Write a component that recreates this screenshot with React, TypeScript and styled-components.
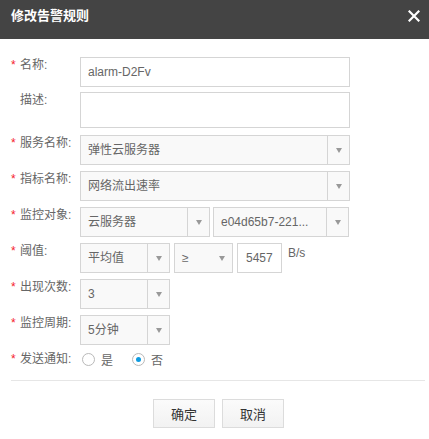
import React from "react";
import styled, { createGlobalStyle } from "styled-components";

const GlobalStyle = createGlobalStyle`
  html, body { margin: 0; padding: 0; background: #fff; }
  body { font-family: "Liberation Sans", "Noto Sans CJK SC", sans-serif; }
  * { box-sizing: border-box; }
`;

const Dialog = styled.div`
  width: 429px;
  height: 439px;
  background: #fff;
  display: flex;
  flex-direction: column;
`;

const Header = styled.div`
  height: 39px;
  background: #444;
  display: flex;
  justify-content: space-between;
  align-items: flex-start;
  padding: 7px 9px 0 11px;
`;

const Title = styled.div`
  color: #fff;
  font-size: 13px;
  font-weight: bold;
  line-height: 17px;
`;

const Close = styled.button`
  border: 0;
  background: transparent;
  padding: 0;
  margin-top: 3px;
  width: 12px;
  height: 12px;
  display: flex;
  cursor: pointer;
`;

const Body = styled.div`
  padding: 18px 4px 0 11px;
  display: flex;
  flex-direction: column;
`;

const Row = styled.div<{ $gap?: number }>`
  display: flex;
  align-items: flex-start;
  margin-bottom: ${(p) => (p.$gap ?? 6)}px;
`;

const Label = styled.div`
  width: 69px;
  flex: none;
  display: flex;
  font-size: 12px;
  line-height: 17px;
  color: #666;
`;

const Star = styled.span`
  width: 9px;
  color: #f5222d;
  font-size: 12px;
`;

const Controls = styled.div<{ $gap?: number }>`
  display: flex;
  align-items: flex-start;
  gap: ${(p) => p.$gap ?? 4}px;
`;

const TextInput = styled.div<{ $w: number; $h?: number; $pad?: number }>`
  width: ${(p) => p.$w}px;
  height: ${(p) => p.$h ?? 30}px;
  border: 1px solid #d5d5d5;
  background: #fff;
  font-size: 12px;
  color: #666;
  line-height: 28px;
  padding-left: ${(p) => p.$pad ?? 7}px;
  white-space: nowrap;
  overflow: hidden;
`;

const SelectBox = styled.div<{ $w: number }>`
  width: ${(p) => p.$w}px;
  height: 30px;
  border: 1px solid #d5d5d5;
  background: #f9f9f9;
  display: flex;
  font-size: 12px;
  color: #666;
`;

const SelectValue = styled.div`
  flex: 1;
  line-height: 28px;
  padding-left: 7px;
  white-space: nowrap;
  overflow: hidden;
`;

const ArrowCell = styled.div<{ $divider: boolean }>`
  width: 22px;
  flex: none;
  border-left: 1px solid ${(p) => (p.$divider ? "#d5d5d5" : "transparent")};
  display: flex;
  align-items: center;
  justify-content: center;
`;

const Arrow = styled.span`
  width: 0;
  height: 0;
  border-left: 3.5px solid transparent;
  border-right: 3.5px solid transparent;
  border-top: 5px solid #999;
  margin-top: 1px;
`;

const Unit = styled.div`
  font-size: 12px;
  line-height: 17px;
  color: #666;
  margin-left: 2px;
  padding-top: 2px;
`;

const RadioGroup = styled.div`
  display: flex;
  align-items: center;
  height: 17px;
  padding-left: 2px;
  gap: 19px;
`;

const RadioItem = styled.label`
  display: flex;
  align-items: center;
  gap: 6px;
  font-size: 12px;
  color: #666;
  cursor: pointer;
`;

const RadioCircle = styled.span<{ $checked: boolean }>`
  width: 13px;
  height: 13px;
  border-radius: 50%;
  border: 1px solid #b9b9b9;
  background: #fff;
  display: flex;
  align-items: center;
  justify-content: center;
  &::after {
    content: "";
    width: 5px;
    height: 5px;
    border-radius: 50%;
    background: ${(p) => (p.$checked ? "#0e9be0" : "transparent")};
  }
`;

const Divider = styled.div`
  height: 1px;
  background: #e6e6e6;
  margin-top: 12px;
`;

const Footer = styled.div`
  display: flex;
  justify-content: center;
  gap: 7px;
  padding-top: 18px;
  padding-left: 1px;
`;

const Button = styled.button`
  width: 62px;
  height: 29px;
  border: 1px solid #dcdcdc;
  background: linear-gradient(#fbfbfb, #f2f2f2);
  font-family: inherit;
  font-size: 13px;
  color: #333;
  padding: 0;
  cursor: pointer;
`;

type SelectProps = { w: number; value: string; divider?: boolean };

const Select = ({ w, value, divider = true }: SelectProps) => (
  <SelectBox $w={w}>
    <SelectValue>{value}</SelectValue>
    <ArrowCell $divider={divider}>
      <Arrow />
    </ArrowCell>
  </SelectBox>
);

const FieldLabel = ({ text, required = true }: { text: string; required?: boolean }) => (
  <Label>
    <Star>{required ? "*" : ""}</Star>
    <span>{text}:</span>
  </Label>
);

export default function App() {
  return (
    <>
      <GlobalStyle />
      <Dialog>
        <Header>
          <Title>修改告警规则</Title>
          <Close aria-label="关闭">
            <svg width="12" height="12" viewBox="0 0 12 12">
              <path d="M1.5 1.5 L10.5 10.5 M10.5 1.5 L1.5 10.5" stroke="#fff" strokeWidth="2.2" strokeLinecap="square" />
            </svg>
          </Close>
        </Header>
        <Body>
          <Row $gap={5}>
            <FieldLabel text="名称" />
            <TextInput $w={270}>alarm-D2Fv</TextInput>
          </Row>
          <Row $gap={7}>
            <FieldLabel text="描述" required={false} />
            <TextInput $w={270} $h={36} />
          </Row>
          <Row>
            <FieldLabel text="服务名称" />
            <Select w={270} value="弹性云服务器" />
          </Row>
          <Row>
            <FieldLabel text="指标名称" />
            <Select w={270} value="网络流出速率" />
          </Row>
          <Row>
            <FieldLabel text="监控对象" />
            <Controls $gap={3}>
              <Select w={130} value="云服务器" />
              <Select w={136} value="e04d65b7-221..." />
            </Controls>
          </Row>
          <Row>
            <FieldLabel text="阈值" />
            <Controls $gap={4}>
              <Select w={90} value="平均值" />
              <Select w={59} value="≥" divider={false} />
              <TextInput $w={45} $pad={8}>5457</TextInput>
              <Unit>B/s</Unit>
            </Controls>
          </Row>
          <Row>
            <FieldLabel text="出现次数" />
            <Select w={90} value="3" />
          </Row>
          <Row>
            <FieldLabel text="监控周期" />
            <Select w={90} value="5分钟" />
          </Row>
          <Row $gap={0}>
            <FieldLabel text="发送通知" />
            <RadioGroup>
              <RadioItem>
                <RadioCircle $checked={false} />
                是
              </RadioItem>
              <RadioItem>
                <RadioCircle $checked />
                否
              </RadioItem>
            </RadioGroup>
          </Row>
          <Divider />
          <Footer>
            <Button>确定</Button>
            <Button>取消</Button>
          </Footer>
        </Body>
      </Dialog>
    </>
  );
}
